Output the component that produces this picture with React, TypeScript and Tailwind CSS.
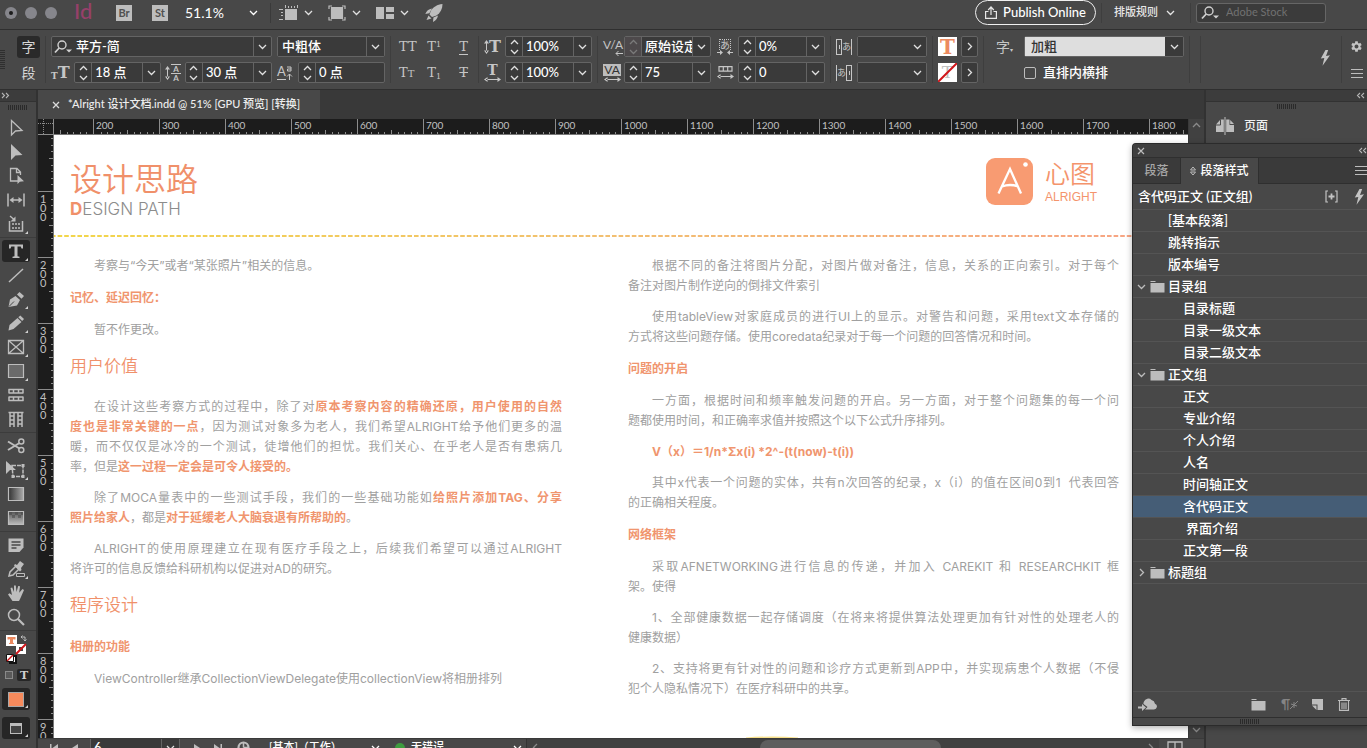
import React from "react";
import { MdSettings } from "react-icons/md";

type Kids = { children?: React.ReactNode };

/* ---------- small shared drawings ---------- */

function Chevron({ dir = "down", className = "" }: { dir?: "down" | "up" | "left" | "right"; className?: string }) {
  const d = {
    down: "M1 3 L4.500 6.500 L8 3",
    up: "M1 6 L4.500 2.500 L8 6",
    left: "M6 1 L2.500 4.500 L6 8",
    right: "M3 1 L6.500 4.500 L3 8",
  }[dir];
  return (
    <svg width="9" height="9" viewBox="0 0 9 9" fill="none" stroke="currentColor" strokeWidth="1.3" className={"shrink-0 " + className}>
      <path d={d} />
    </svg>
  );
}

function DoubleChevron({ dir }: { dir: "left" | "right" }) {
  return (
    <svg width="9" height="7" viewBox="0 0 9 7" fill="none" stroke="#b5b5b5" strokeWidth="1.1">
      <path d={dir === "right" ? "M1 1 L3.500 3.500 L1 6 M5 1 L7.500 3.500 L5 6" : "M4 1 L1.500 3.500 L4 6 M8 1 L5.500 3.500 L8 6"} />
    </svg>
  );
}

function Grip() {
  return (
    <svg width="20" height="5" viewBox="0 0 20 5" stroke="#2a2a2a" strokeWidth="1">
      <path d="M.5 0v5M2.500 0v5M4.500 0v5M6.500 0v5M8.500 0v5M10.500 0v5M12.500 0v5M14.500 0v5M16.500 0v5M18.500 0v5" />
    </svg>
  );
}

function Sep({ className = "" }: { className?: string }) {
  return <div className={"mx-[5px] w-px shrink-0 bg-[#3e3e3e] " + className} />;
}

function SearchGlyph() {
  return (
    <svg width="19" height="14" viewBox="0 0 19 14" className="shrink-0" fill="none" stroke="#d0d0d0" strokeWidth="1.400">
      <circle cx="8" cy="5" r="4" />
      <path d="M5.200 8 L1 12.500" strokeWidth="1.800" />
      <path d="M12 9.500h6l-3 3z" fill="#d0d0d0" stroke="none" />
    </svg>
  );
}

function Folder() {
  return (
    <svg width="15" height="12" viewBox="0 0 15 12" fill="#bdbdbd" className="shrink-0">
      <path d="M.5 0h5v1h-5zM.5 2H14.500V11.500H.5z" />
    </svg>
  );
}

function Bolt() {
  return (
    <svg width="11" height="16" viewBox="0 0 11 16" fill="#c4c4c4" className="shrink-0">
      <path d="M5.500 0 L.8 8.500 L4.300 8 L2.500 15.800 L10 5.300 L6 6 L8.200 0z" />
    </svg>
  );
}

function MenuLines() {
  return (
    <svg width="12" height="9" viewBox="0 0 12 9" stroke="#bdbdbd" className="shrink-0">
      <path d="M0 .5h12M0 4.500h12M0 8.500h12" />
    </svg>
  );
}

/* ---------- application bar ---------- */

function BarMenu({ label, children }: Kids & { label: string }) {
  return (
    <button aria-label={label} className="flex items-center gap-1.5 text-[#e0e0e0]">
      {children}
      <Chevron />
    </button>
  );
}

function AppBar() {
  return (
    <header className="flex h-[30px] shrink-0 items-start border-b border-[#2f2f2f] bg-[#484848]">
      <div className="flex h-[25px] items-center">
        <div className="ml-[5px] flex gap-2">
          <span className="grid size-3 place-items-center rounded-full bg-[#86868c]">
            <span className="size-1 rounded-full bg-[#1c1c1c]" />
          </span>
          <span className="size-3 rounded-full bg-[#86868c]" />
          <span className="size-3 rounded-full bg-[#86868c]" />
        </div>
        <span className="ml-[17px] w-6 pb-1 text-[22px] leading-5 font-medium text-[#96406a]">Id</span>
        <a href="#bridge" className="ml-[18px] grid size-4 place-items-center bg-[#bdbdbd] text-[11px] font-bold text-[#505050]">Br</a>
        <a href="#stock" className="ml-5 grid size-4 place-items-center bg-[#bdbdbd] text-[11px] font-bold text-[#505050]">St</a>
        <button className="ml-[17px] flex w-[73px] items-center justify-between text-[14px] text-white">
          51.1%
          <Chevron />
        </button>
        <div className="ml-3 h-5 w-px bg-[#3a3a3a]" />
        <div className="ml-2 flex gap-[15px]">
          <BarMenu label="视图选项">
            <svg width="19" height="17" viewBox="0 0 19 17" fill="#bdbdbd">
              <path d="M6 5h12v11H6z" />
              <path d="M6 1h1v3H6zM9 2h1v2H9zM12 2h1v2h-1zM15 2h1v2h-1zM18 1h1v3h-1zM0 5h4v1H0zM2 8h2v1H2zM2 11h2v1H2zM0 15h4v1H0z" />
            </svg>
          </BarMenu>
          <BarMenu label="屏幕模式">
            <svg width="18" height="16" viewBox="0 0 18 16" fill="none" stroke="#bdbdbd" strokeWidth="1.200">
              <path d="M3.500 2.500h11v11h-11z" fill="#bdbdbd" />
              <path d="M1 4V1h3M14 1h3v3M17 12v3h-3M4 15H1v-3" />
            </svg>
          </BarMenu>
          <BarMenu label="排列文档">
            <svg width="18" height="12" viewBox="0 0 18 12" fill="#bdbdbd">
              <path d="M0 0h8v12H0zM10 0h8v5h-8zM10 7h8v5h-8z" />
            </svg>
          </BarMenu>
        </div>
        <button aria-label="GPU 性能" className="ml-4">
          <svg width="18" height="18" viewBox="0 0 18 18" fill="#bdbdbd">
            <path d="M17.500 0C12 .5 8.500 3 6 6.500L4.500 10.500 7 13l4.500-1.500C15.500 8.500 17.500 5 17.500 0z" />
            <path d="M7 4.500C3.500 5 1.500 7 .3 10l4-.8zM13 11.500c-.5 3-2 5-5 6.500l.4-4.500zM3.500 11.500L1.500 16l5-1.500z" />
          </svg>
        </button>
      </div>

      <div className="ml-auto flex h-[25px] items-center">
        <button className="flex h-[25px] items-center gap-1.5 rounded-full border border-[#f0f0f0] px-[9px] text-[13px] font-medium text-white">
          <svg width="12" height="13" viewBox="0 0 12 13" fill="none" stroke="#e6e6e6" strokeWidth="1.200">
            <path d="M3.500 5.500H.6v6.800h10.800V5.500H8.500" />
            <path d="M6 9V1.500M3.200 4L6 1l2.800 3" />
          </svg>
          Publish Online
        </button>
        <Sep className="h-5" />
        <button className="ml-[7px] flex items-center gap-2 text-[11px] font-medium text-[#e6e6e6]">
          排版规则
          <Chevron />
        </button>
        <div className="ml-[15px] h-5 w-px bg-[#3e3e3e]" />
        <label className="mr-[41px] ml-[5px] flex h-5 w-[130px] items-center gap-1.5 rounded-[3px] border border-[#666] bg-[#3b3b3b] px-1">
          <SearchGlyph />
          <input aria-label="搜索 Adobe Stock" placeholder="Adobe Stock" className="w-full min-w-0 bg-transparent text-[11px] outline-none placeholder:text-[#717171]" />
        </label>
      </div>
    </header>
  );
}

/* ---------- control bar ---------- */

function Field({ label, value, className, spin = false, spinOff = false, drop = true, lead }: {
  label: string; value: string; className: string; spin?: boolean; spinOff?: boolean; drop?: boolean; lead?: React.ReactNode;
}) {
  return (
    <div className={"flex h-[21px] shrink-0 overflow-hidden rounded-[2px] border border-[#646464] bg-[#3a3a3a] text-[#e0e0e0] " + className}>
      {spin && (
        <button
          aria-label={label + " 微调"}
          disabled={spinOff}
          className={"flex w-[17px] shrink-0 flex-col items-center justify-center border-r border-[#646464] " + (spinOff ? "bg-[#4d494b] text-[#7a7a7a]" : "")}
        >
          <Chevron dir="up" />
          <Chevron />
        </button>
      )}
      {lead}
      <input aria-label={label} defaultValue={value} className="w-full min-w-0 flex-1 bg-transparent pl-[3px] text-[13px] font-medium text-white outline-none" />
      {drop && (
        <button aria-label={label + " 菜单"} className="grid w-[18px] shrink-0 place-items-center border-l border-[#646464]">
          <Chevron />
        </button>
      )}
    </div>
  );
}

function Pick({ label, value, className, box = "bg-[#3a3a3a] text-white", arrow = "" }: {
  label: string; value: string; className: string; box?: string; arrow?: string;
}) {
  return (
    <div className={"relative flex h-[21px] shrink-0 rounded-[2px] border border-[#646464] " + className}>
      <select aria-label={label} className={"w-full appearance-none pl-1 text-[13px] font-medium outline-none " + box}>
        <option>{value}</option>
      </select>
      <span className={"pointer-events-none absolute inset-y-0 right-0 grid w-[18px] place-items-center text-[#e0e0e0] " + arrow}>
        <Chevron />
      </span>
    </div>
  );
}

function Stack({ children, className = "" }: Kids & { className?: string }) {
  return <div className={"flex shrink-0 flex-col gap-[5px] " + className}>{children}</div>;
}

function Row({ children, className = "" }: Kids & { className?: string }) {
  return <div className={"flex h-[21px] items-center " + className}>{children}</div>;
}

const serif = "[font-family:'DejaVu_Serif',serif] leading-none text-[#c6c6c6] ";

function Arrows({ vertical = false }: { vertical?: boolean }) {
  return vertical ? (
    <svg width="5" height="14" viewBox="0 0 5 14" fill="#c6c6c6" className="shrink-0">
      <path d="M2 2h1v10H2zM0 3.500L2.500 0 5 3.500zM0 10.500L2.500 14 5 10.500z" />
    </svg>
  ) : (
    <svg width="17" height="5" viewBox="0 0 17 5" fill="#c6c6c6" className="shrink-0">
      <path d="M2 2h13v1H2zM3.500 0L0 2.500 3.500 5zM13.500 0L17 2.500 13.500 5z" />
    </svg>
  );
}

function KanaSpace({ after }: { after?: boolean }) {
  const mark = (
    <span className="grid h-4 w-[6px] place-items-center border border-[#c6c6c6]">
      <span className="h-1 w-px bg-[#c6c6c6]" />
    </span>
  );
  return (
    <span className="flex w-[17px] items-center text-[9px] leading-none text-[#c6c6c6]">
      {after ? <span className="h-4 w-px bg-[#c6c6c6]" /> : mark}
      あ
      {after ? mark : <span className="h-4 w-px bg-[#c6c6c6]" />}
    </span>
  );
}

function ControlBar() {
  return (
    <section aria-label="控制" className="flex h-[60px] shrink-0 items-start overflow-hidden border-b border-[#2f2f2f] bg-[#484848] pt-1.5">
      <div className="mt-3.5 h-5 w-[5px] shrink-0 bg-[repeating-linear-gradient(#2f2f2f_0_1px,#484848_1px_2px)]" />
      <div className="ml-3 flex w-[23px] shrink-0 flex-col items-center gap-1 text-[14px] text-[#d6d6d6]">
        <button className="grid h-[22px] w-full place-items-center rounded-[3px] bg-[#2a2a2a] leading-none">字</button>
        <button className="grid h-[22px] w-full place-items-center leading-none">段</button>
      </div>
      <Sep className="h-[47px]" />
      <Stack className="w-[221px]">
        <Field label="字体" value="苹方-简" className="w-full" lead={<span className="flex items-center pl-0.5"><SearchGlyph /></span>} />
        <Row className="justify-between">
          <span className={serif + "flex w-[19px] items-end font-bold"}>
            <span className="text-[9px] leading-none">T</span>
            <span className="text-[16px] leading-none">T</span>
          </span>
          <Field label="字号" value="18 点" className="w-[87px]" spin />
          <span className="flex items-center gap-px">
            <Arrows vertical />
            <span className="flex flex-col items-center text-[8px] leading-2 font-bold text-[#c6c6c6]">
              <span className="border-t border-[#c6c6c6] px-0.5">A</span>
              <span className="border-t border-[#c6c6c6] px-0.5">A</span>
            </span>
          </span>
          <Field label="行距" value="30 点" className="w-[87px]" spin />
        </Row>
      </Stack>
      <Stack className="ml-[5px] w-[108px]">
        <Pick label="字体样式" value="中粗体" className="w-full" arrow="border-l border-[#646464]" />
        <Row className="justify-between">
          <span className="flex text-[#c6c6c6]">
            <span className="border-b border-[#c6c6c6] text-[13px] leading-[13px]">A</span>
            <svg width="7" height="15" viewBox="0 0 7 15" fill="none" stroke="#c6c6c6">
              <path d="M1 2h4v4H1.500V4H5M3.500 15V9M1 11.500L3.500 9 6 11.500" />
            </svg>
          </span>
          <Field label="基线偏移" value="0 点" className="w-[87px]" spin drop={false} />
        </Row>
      </Stack>
      <Sep className="h-[47px]" />
      <div className="ml-[3px] grid w-[73px] shrink-0 grid-cols-3 gap-y-[5px]">
        <button aria-label="全部大写字母" className={serif + "h-[21px] text-left text-[13px]"}>TT</button>
        <button aria-label="上标" className={serif + "h-[21px] pl-1 text-left text-[13px]"}>T<sup className="text-[8px]">1</sup></button>
        <button aria-label="下划线" className={serif + "h-[21px] pr-1 text-right text-[13px]"}><span className="border-b border-[#c6c6c6]">T</span></button>
        <button aria-label="小型大写字母" className={serif + "h-[21px] text-left text-[13px]"}>T<span className="text-[10px]">T</span></button>
        <button aria-label="下标" className={serif + "h-[21px] pl-1 text-left text-[13px]"}>T<sub className="text-[8px]">1</sub></button>
        <button aria-label="删除线" className={serif + "h-[21px] pr-1 text-right text-[13px] line-through"}>T</button>
      </div>
      <Sep className="ml-1.5 h-[47px]" />
      <Stack className="w-[108px]">
        <Row className="justify-between">
          <span className={serif + "flex items-center text-[16px] font-bold"}><Arrows vertical />T</span>
          <Field label="垂直缩放" value="100%" className="w-[87px]" spin />
        </Row>
        <Row className="justify-between">
          <span className={serif + "flex flex-col items-center text-[14px] font-bold"}>
            <span className="h-[14px] leading-[14px]">T</span>
            <Arrows />
          </span>
          <Field label="水平缩放" value="100%" className="w-[87px]" spin />
        </Row>
      </Stack>
      <Sep className="h-[47px]" />
      <Stack className="w-[108px]">
        <Row className="justify-between">
          <span className="flex flex-col items-end text-[12px] text-[#c6c6c6]">
            <span className="h-[13px] leading-[13px]">V/A</span>
            <svg width="8" height="5" viewBox="0 0 8 5" stroke="#c6c6c6" fill="none"><path d="M8 2.500H1M3.500 0L1 2.500 3.500 5" /></svg>
          </span>
          <Field label="字偶间距" value="原始设定" className="w-[87px]" spin spinOff />
        </Row>
        <Row className="justify-between">
          <span className="flex flex-col items-center gap-px">
            <span className="w-[18px] bg-[#bdbdbd] text-center text-[12px] leading-[12px] text-[#333]">VA</span>
            <Arrows />
          </span>
          <Field label="字符间距" value="75" className="w-[87px]" spin />
        </Row>
      </Stack>
      <Stack className="ml-1.5 w-[108px]">
        <Row className="justify-between">
          <span className="flex flex-col items-center text-[10px] text-[#c6c6c6]">
            <span className="border-x border-t border-dotted border-[#c6c6c6] leading-[10px]">あ</span>
            <svg width="16" height="5" viewBox="0 0 16 5" fill="#c6c6c6"><path d="M0 2h3v1H0zM3 0l3 2.500L3 5zM13 2h3v1h-3zM13 0l-3 2.500L13 5z" /></svg>
          </span>
          <Field label="比例间距" value="0%" className="w-[87px]" spin />
        </Row>
        <Row className="justify-between">
          <span className="flex flex-col items-center gap-0.5">
            <svg width="15" height="6" viewBox="0 0 15 6" fill="none" stroke="#c6c6c6" strokeWidth="1.200"><path d="M1 .6h13v4.500H1zM5.300 1v4M9.700 1v4" /></svg>
            <Arrows />
          </span>
          <Field label="网格指定格数" value="0" className="w-[87px]" spin />
        </Row>
      </Stack>
      <Sep className="h-[47px]" />
      <Stack>
        <Row className="gap-1"><KanaSpace /><Pick label="字符前挤压间距" value="" className="w-[70px]" /></Row>
        <Row className="gap-1"><KanaSpace after /><Pick label="字符后挤压间距" value="" className="w-[70px]" /></Row>
      </Stack>
      <Sep className="h-[47px]" />
      <Stack>
        <Row className="gap-1">
          <button aria-label="填色" className="grid size-[19px] place-items-center bg-white text-[20px] leading-none font-bold text-[#ec8a60] [font-family:'DejaVu_Serif',serif]">T</button>
          <button aria-label="填色选项" className="grid h-[21px] w-[17px] place-items-center rounded-[2px] border border-[#646464] bg-[#3a3a3a] text-[#e0e0e0]"><Chevron dir="right" /></button>
        </Row>
        <Row className="gap-1">
          <button aria-label="描边" className="relative grid size-[19px] place-items-center bg-white text-[17px] leading-none text-[#c0c0c0] [font-family:'DejaVu_Serif',serif]">
            T
            <svg viewBox="0 0 19 19" className="absolute inset-0" stroke="#d0161b" strokeWidth="2"><path d="M0 19L19 0" /></svg>
          </button>
          <button aria-label="描边选项" className="grid h-[21px] w-[17px] place-items-center rounded-[2px] border border-[#646464] bg-[#3a3a3a] text-[#e0e0e0]"><Chevron dir="right" /></button>
        </Row>
      </Stack>
      <Sep className="h-[47px]" />
      <span className="mt-1 ml-[7px] w-[28px] shrink-0 text-[14px] leading-none text-[#c6c6c6]">字<span className="text-[6px]">▾</span></span>
      <Stack>
        <Pick label="字符样式" value="加粗" className="w-[160px]" box="bg-[#dedede] pl-1.5 text-[#333]" arrow="bg-[#3a3a3a]" />
        <Row>
          <label className="flex items-center gap-[7px] text-[13px] font-medium text-white">
            <input type="checkbox" className="size-3 appearance-none rounded-[2px] border border-[#bdbdbd]" />
            直排内横排
          </label>
        </Row>
      </Stack>
      <Sep className="h-[47px]" />
      <Sep className="h-[47px]" />
      <div className="ml-auto flex items-start">
        <button aria-label="快速应用" className="mt-3.5 mr-[5px]"><Bolt /></button>
        <Sep className="h-[47px]" />
        <div className="mr-1 ml-[3px] flex flex-col items-center gap-4 pt-1">
          <button aria-label="设置"><MdSettings size={13} color="#c4c4c4" /></button>
          <button aria-label="菜单"><MenuLines /></button>
        </div>
      </div>
    </section>
  );
}

/* ---------- tools ---------- */

const G = "#bdbdbd";
type ToolDef = { name: string; art: React.ReactNode; more?: boolean; on?: boolean };

const toolGroups: ToolDef[][] = [
  [
    { name: "选择", art: <path d="M5.500 2.500V17L9.500 13l6.500-.5z" fill="none" stroke={G} strokeWidth="1.300" /> },
    { name: "直接选择", art: <path d="M5 2V18L9.500 13.500l7-.5z" fill={G} /> },
    { name: "页面", art: <><path d="M12 15H4.500V2.500H11l3.500 3.500v3M10.500 3v3.500H14" fill="none" stroke={G} strokeWidth="1.300" /><path d="M11.500 9v9l2.300-2.300 4.200-.4z" fill={G} /></> },
    { name: "间隙", art: <><path d="M2 3.500v13M18 3.500v13M5 10h10" stroke={G} strokeWidth="1.500" /><path d="M7.500 7L3.500 10l4 3zM12.500 7l4 3-4 3z" fill={G} /></> },
    { name: "内容收集器", more: true, art: <><path d="M3.500 7v10h13V7" fill="none" stroke={G} strokeWidth="1.500" /><path d="M6 10h9M6 14h9" stroke={G} strokeDasharray="2 1" strokeWidth="1.500" /><path d="M4 2l4 3.500" stroke={G} strokeWidth="1.300" /><path d="M9.500 2.500v5h-5z" fill={G} /></> },
  ],
  [
    { name: "文字", more: true, on: true, art: <path d="M3 3.500h14v4h-1.500l-.8-2H11.500v9.700l2 .5v1.300h-7v-1.300l2-.5V5.500H5.300l-.8 2H3z" fill={G} /> },
    { name: "直线", art: <path d="M3 17L17 4" stroke={G} strokeWidth="1.500" /> },
    { name: "钢笔", more: true, art: <><path d="M2.500 18l1.500-7.500 5.500-3.500 4.500 4-3 5.500z" fill={G} /><path d="M11 5.500l2.500-2.500 4.500 4-2.500 2.800z" fill={G} /><path d="M3 17.500l5-5" stroke="#484848" /></> },
    { name: "铅笔", more: true, art: <><path d="M2.500 17.500l1-5.500 8-7 4 4-8 7z" fill={G} /><path d="M12.300 4.200l2-1.700 3.700 3.500-1.800 2z" fill={G} /></> },
    { name: "矩形框架", more: true, art: <path d="M2.500 3.500h15v13h-15zM2.500 3.500l15 13M17.500 3.500l-15 13" fill="none" stroke={G} strokeWidth="1.300" /> },
    { name: "矩形", more: true, art: <path d="M2.500 3.500h15v13h-15z" fill="#6a6a6a" stroke={G} strokeWidth="1.200" /> },
    { name: "水平网格", art: <path d="M2.500 4.500h15M2.500 8h15M2.500 12h15M2.500 15.500h15M3 4v4M7.500 4v4M12.500 4v4M17 4v4M3 12v4M7.500 12v4M12.500 12v4M17 12v4" stroke={G} strokeWidth="1.500" /> },
    { name: "垂直网格", art: <path d="M2.500 3.500h15M4 3v15M8 3v15M12 3v15M16 3v15M4 7h4M4 11h4M4 15h4M12 7h4M12 11h4M12 15h4" stroke={G} strokeWidth="1.500" /> },
  ],
  [
    { name: "剪刀", art: <><path d="M2 5.500l11.500 7M2 14l11.500-7" stroke={G} strokeWidth="2" /><circle cx="15.300" cy="5.500" r="2.500" fill="none" stroke={G} strokeWidth="1.500" /><circle cx="15.300" cy="14" r="2.500" fill="none" stroke={G} strokeWidth="1.500" /></> },
    { name: "自由变换", more: true, art: <><path d="M6 5.500h11v11H7z" fill="none" stroke={G} strokeDasharray="4 1" strokeWidth="1.500" /><path d="M0 1v13l4-4h6z" fill={G} /><path d="M5.500 15h3v3h-3zM15.500 15h3v3h-3zM15.500 4h3v3h-3z" fill={G} /></> },
    { name: "渐变色板", art: <><defs><linearGradient id="g1"><stop offset="0" stopColor="#333" /><stop offset="1" stopColor="#aaa" /></linearGradient></defs><path d="M2.500 3.500h15v13h-15z" fill="url(#g1)" stroke={G} strokeWidth="1.200" /></> },
    { name: "渐变羽化", art: <><defs><linearGradient id="g2" x2="0" y2="1"><stop offset="0" stopColor="#555" /><stop offset="1" stopColor="#bbb" /></linearGradient></defs><path d="M2.500 3.500h15v13h-15z" fill="url(#g2)" stroke={G} strokeWidth="1.200" /><path d="M3 4h3v3H3zM9 4h3v3H9zM6 7h3v3H6zM12 7h3v3h-3zM15 4h2v3h-2z" fill="#444" opacity=".5" /></> },
  ],
  [
    { name: "附注", art: <><path d="M2.500 3.500h15v9l-4 4.500h-11z" fill={G} /><path d="M5.500 7h9M5.500 10h9M5.500 13h5" stroke="#484848" strokeWidth="1.300" /></> },
    { name: "吸管", more: true, art: <><path d="M3 17l1-4 6-6 3 3-6 6z" fill="none" stroke={G} strokeWidth="1.500" /><path d="M9 5l2 1 3-4 4 3-3 4 .5 2-1.500 1.500L8 6.500z" fill={G} /><path d="M10.500 14.500h8v3h-8z" fill="none" stroke={G} /></> },
    { name: "抓手", art: <path d="M6.500 18L2 11.500l1.500-1.200L6 12 4.500 5l1.700-.5L8 9V2.500h1.800L10.500 9l1.700-6 1.800.3-.8 6.500L16.500 6l1.500 1-3.500 8-1.500 3z" fill={G} /> },
    { name: "缩放显示", art: <><circle cx="8" cy="8" r="5.500" fill="none" stroke={G} strokeWidth="1.500" /><path d="M12 12l6 6" stroke={G} strokeWidth="2.200" /></> },
  ],
];

function MoreMark() {
  return (
    <svg width="3" height="3" viewBox="0 0 4 4" className="absolute right-0.5 bottom-0.5" fill="#d0d0d0"><path d="M4 0v4H0z" /></svg>
  );
}

function Toolbar() {
  return (
    <nav aria-label="工具" className="flex w-[38px] shrink-0 flex-col overflow-hidden border-r-2 border-[#323232] bg-[#484848]">
      <div className="flex h-3 shrink-0 items-center border-b border-[#323232] bg-[#3c3c3c] pl-px"><DoubleChevron dir="right" /></div>
      <div className="flex h-3.5 shrink-0 justify-center pt-[3px]"><Grip /></div>
      {toolGroups.map((group, i) => (
        <div key={i} className={"mb-px shrink-0 " + (i ? "border-t border-[#3c3c3c] pt-px" : "")}>
          {group.map((t) => (
            <button key={t.name} aria-label={t.name} className="relative ml-0.5 flex h-6 w-7 items-center justify-center">
              <span className={"flex h-[22px] w-7 items-center justify-center rounded-[3px] " + (t.on ? "bg-[#262626]" : "")}>
                <svg width="20" height="20" viewBox="0 0 20 20">{t.art}</svg>
              </span>
              {t.more && <MoreMark />}
            </button>
          ))}
        </div>
      ))}
      <div className="flex shrink-0 flex-col items-start border-t border-[#3c3c3c] pt-1 pl-0.5">
        <button aria-label="填色与描边" className="ml-1">
          <svg width="22" height="30" viewBox="0 0 22 30">
            <path d="M10 9h10v10H10z" fill="#fff" />
            <path d="M13 12h4v4h-4z" fill="#484848" />
            <path d="M10 19L20 9" stroke="#d0161b" strokeWidth="2" />
            <path d="M0 0h11v11H0z" fill="#fff" />
            <path d="M1.500 2h8v2.500h-2l-.5-.8v4l1 .6v.7H3v-.7l1-.6v-4l-.5.8h-2z" fill="#ec8a60" />
            <path d="M15 2h4v4M15 2l1.500-1.500M15 2l1.500 1.500M19 6l-1.500-1.500M19 6l1.500-1.500" fill="none" stroke={G} />
            <path d="M4 21h6v7H4z" fill="#fff" stroke="#111" strokeWidth="2" />
            <path d="M.5 19.500h7v7h-7z" fill="#fff" stroke="#111" />
            <path d="M1 26l6-6" stroke="#d0161b" strokeWidth="1.500" />
          </svg>
        </button>
        <div className="mt-1 flex items-center gap-1 pl-[3px]">
          <button aria-label="格式针对容器" className="size-2 border border-[#8a8a8a] bg-[#5a5a5a]" />
          <button aria-label="格式针对文本" className="grid h-3 w-3.5 place-items-center rounded-[2px] bg-[#262626] text-[11px] leading-none font-bold text-[#d0d0d0] [font-family:'DejaVu_Serif',serif]">T</button>
        </div>
        <button aria-label="应用颜色" className="relative mt-[7px] grid h-[22px] w-7 place-items-center rounded-[3px] bg-[#262626]">
          <span className="h-[15px] w-4 border border-[#a8a8a8] bg-[#f68a5c]" />
          <MoreMark />
        </button>
        <button aria-label="屏幕模式" className="relative mt-[7px] grid h-[22px] w-7 place-items-center rounded-[3px] bg-[#262626]">
          <span className="h-[11px] w-3 border-x border-t-[3px] border-b border-[#bdbdbd] bg-[#444]" />
          <MoreMark />
        </button>
      </div>
    </nav>
  );
}

/* ---------- rulers ---------- */

const minor = [1, 2, 3, 4, 5, 6, 7, 8, 9];

function HTicks() {
  return (
    <svg width="66" height="4" viewBox="0 0 66 4" className="mt-auto shrink-0" fill="#8c8c8c">
      {minor.map((n) => <rect key={n} x={Math.round(n * 6.6)} y={n === 5 ? 0 : 2} width="1" height="4" />)}
    </svg>
  );
}

function VTicks() {
  return (
    <svg width="4" height="66" viewBox="0 0 4 66" className="ml-auto shrink-0" fill="#8c8c8c">
      {minor.map((n) => <rect key={n} y={Math.round(n * 6.6)} x={n === 5 ? 0 : 2} height="1" width="4" />)}
    </svg>
  );
}

function HRuler() {
  const marks = Array.from({ length: 17 }, (_, i) => 200 + i * 100);
  return (
    <div className="flex h-4 min-w-0 flex-1 overflow-hidden border-b border-[#777] bg-[#1c1c1c] text-[10px] leading-[12px] text-[#c0c0c0]">
      <div className="flex w-[39px] shrink-0 justify-end overflow-hidden"><HTicks /></div>
      {marks.map((m) => (
        <div key={m} className="flex w-[66px] shrink-0 flex-col border-l border-[#8c8c8c]">
          <span className="h-[11px] pl-0.5">{m}</span>
          <HTicks />
        </div>
      ))}
    </div>
  );
}

function VRuler() {
  const marks = Array.from({ length: 9 }, (_, i) => 100 + i * 100);
  return (
    <div className="flex w-4 shrink-0 flex-col overflow-hidden border-r border-[#777] bg-[#1c1c1c] text-[11px] leading-[9px] text-[#c0c0c0]">
      <div className="flex h-14 shrink-0 flex-col justify-end overflow-hidden"><VTicks /></div>
      {marks.map((m) => (
        <div key={m} className="flex h-[66px] shrink-0 overflow-hidden border-t border-[#8c8c8c]">
          <span className="ml-[2px] w-[8px] pt-0.5 break-all">{m}</span>
          <VTicks />
        </div>
      ))}
    </div>
  );
}

/* ---------- document ---------- */

function Full({ children, first = false }: Kids & { first?: boolean }) {
  return <span className={"block whitespace-nowrap [text-align-last:justify] " + (first ? "pl-6" : "")}>{children}</span>;
}
function Tail({ children, first = false }: Kids & { first?: boolean }) {
  return <span className={"block whitespace-nowrap " + (first ? "pl-6" : "")}>{children}</span>;
}
function B({ children }: Kids) {
  return <b className="font-bold text-[#f0956e]">{children}</b>;
}
function H2({ children }: Kids) {
  return <h2 className="mt-[5px] mb-2.5 text-[17px] font-[350] text-[#f0906a]">{children}</h2>;
}
function H3({ children }: Kids) {
  return <h3 className="my-px font-bold text-[#f0956e]">{children}</h3>;
}

function Page() {
  return (
    <main className="flex min-w-0 flex-1 flex-col overflow-hidden bg-white [font-family:Inter,'Noto_Sans_CJK_SC',sans-serif]">
      <div className="flex h-[100px] w-[1043px] shrink-0 items-start justify-between pt-[23px] pl-4">
        <div>
          <h1 className="text-[32px] leading-[44px] font-[350] text-[#f0906a]">设计思路</h1>
          <p className="text-[17px] leading-[14px] font-light text-[#8c8c8c]"><b className="font-bold text-[#f0906a]">D</b>ESIGN PATH</p>
        </div>
        <div className="flex items-center gap-3">
          <svg width="47" height="47" viewBox="0 0 47 47">
            <rect width="47" height="47" rx="9" fill="#f89b72" />
            <path d="M12.500 35.500L24 11l11 24.500M16 28.500q8-3 16 0" fill="none" stroke="#fff" strokeWidth="2.300" />
            <circle cx="39.500" cy="6.500" r="2.300" fill="#fff" />
          </svg>
          <div className="text-[#f4946c]">
            <div className="text-[25px] leading-[30px] font-[350]">心图</div>
            <div className="text-[12px] leading-4 [font-family:'Liberation_Sans',sans-serif]">ALRIGHT</div>
          </div>
        </div>
      </div>
      <svg width="100%" height="2" className="block shrink-0">
        <defs>
          <linearGradient id="rule" gradientUnits="userSpaceOnUse" x1="0" x2="1075" y1="0" y2="0">
            <stop offset="0" stopColor="#f2d64a" />
            <stop offset=".5" stopColor="#f2c070" />
            <stop offset="1" stopColor="#f7a583" />
          </linearGradient>
        </defs>
        <path d="M0 1H2000" stroke="url(#rule)" strokeWidth="2" strokeDasharray="4.600 2" strokeDashoffset="3" />
      </svg>
      <div className="flex gap-[66px] pt-[19px] pl-4 text-[12px] leading-5 text-[#a0a0a0]">
        <article className="flex w-[492px] shrink-0 flex-col gap-[11px]">
          <p><Tail first>考察与“今天”或者“某张照片”相关的信息。</Tail></p>
          <H3>记忆、延迟回忆：</H3>
          <p><Tail first>暂不作更改。</Tail></p>
          <H2>用户价值</H2>
          <p>
            <Full first>在设计这些考察方式的过程中，除了对<B>原本考察内容的精确还原，用户使用的自然</B></Full>
            <Full><B>度也是非常关键的一点</B>，因为测试对象多为老人，我们希望ALRIGHT给予他们更多的温</Full>
            <Full>暖，而不仅仅是冰冷的一个测试，徒增他们的担忧。我们关心、在乎老人是否有患病几</Full>
            <Tail>率，但是<B>这一过程一定会是可令人接受的。</B></Tail>
          </p>
          <p>
            <Full first>除了MOCA量表中的一些测试手段，我们的一些基础功能如<B>给照片添加TAG、分享</B></Full>
            <Tail><B>照片给家人</B>，都是<B>对于延缓老人大脑衰退有所帮助的</B>。</Tail>
          </p>
          <p>
            <Full first>ALRIGHT的使用原理建立在现有医疗手段之上，后续我们希望可以通过ALRIGHT</Full>
            <Tail>将许可的信息反馈给科研机构以促进对AD的研究。</Tail>
          </p>
          <H2>程序设计</H2>
          <H3>相册的功能</H3>
          <p><Tail first>ViewController继承CollectionViewDelegate使用collectionView将相册排列</Tail></p>
        </article>
        <article className="flex w-[491px] shrink-0 flex-col gap-[11px]">
          <p>
            <Full first>根据不同的备注将图片分配，对图片做对备注，信息，关系的正向索引。对于每个</Full>
            <Tail>备注对图片制作逆向的倒排文件索引</Tail>
          </p>
          <p>
            <Full first>使用tableView对家庭成员的进行UI上的显示。对警告和问题，采用text文本存储的</Full>
            <Tail>方式将这些问题存储。使用coredata纪录对于每一个问题的回答情况和时间。</Tail>
          </p>
          <H3>问题的开启</H3>
          <p>
            <Full first>一方面，根据时间和频率触发问题的开启。另一方面，对于整个问题集的每一个问</Full>
            <Tail>题都使用时间，和正确率求值并按照这个以下公式升序排列。</Tail>
          </p>
          <p><Tail first><B>V（x）＝1/n*Σx(i) *2^-(t(now)-t(i))</B></Tail></p>
          <p>
            <Full first>其中x代表一个问题的实体，共有n次回答的纪录，x（i）的值在区间0到1&nbsp; 代表回答</Full>
            <Tail>的正确相关程度。</Tail>
          </p>
          <H3>网络框架</H3>
          <p>
            <Full first>采取AFNETWORKING进行信息的传递，并加入 CAREKIT 和 RESEARCHKIT 框</Full>
            <Tail>架。使得</Tail>
          </p>
          <p>
            <Full first>1、全部健康数据一起存储调度（在将来将提供算法处理更加有针对性的处理老人的</Full>
            <Tail>健康数据）</Tail>
          </p>
          <p>
            <Full first>2、支持将更有针对性的问题和诊疗方式更新到APP中，并实现病患个人数据（不侵</Full>
            <Tail>犯个人隐私情况下）在医疗科研中的共享。</Tail>
          </p>
        </article>
      </div>
      <svg width="52" height="2" viewBox="0 0 52 2" className="mt-auto ml-[692px] shrink-0">
        <ellipse cx="26" cy="20" rx="80" ry="19.500" fill="#f7e08a" />
      </svg>
    </main>
  );
}

function StatusBar() {
  return (
    <footer className="flex h-2.5 shrink-0 items-start overflow-hidden border-t border-[#3a3a3a] bg-[#484848] text-[12px] font-medium text-white">
      <div className="flex h-[17px] w-[488px] shrink-0 items-center text-[#bdbdbd]">
        <button aria-label="首页" className="ml-3"><svg width="8" height="8" viewBox="0 0 8 8" fill="#bdbdbd"><path d="M0 0h1.500v8H0zM8 0v8L2.500 4z" /></svg></button>
        <button aria-label="上一页" className="ml-3.5"><svg width="6" height="8" viewBox="0 0 6 8" fill="#bdbdbd"><path d="M6 0v8L0 4z" /></svg></button>
        <Field label="页码" value="6" className="ml-3 w-[90px]" />
        <button aria-label="下一页" className="ml-3.5"><svg width="6" height="8" viewBox="0 0 6 8" fill="#bdbdbd"><path d="M0 0v8l6-4z" /></svg></button>
        <button aria-label="末页" className="ml-3.5"><svg width="8" height="8" viewBox="0 0 8 8" fill="#bdbdbd"><path d="M6.500 0H8v8H6.500zM0 0v8l5.500-4z" /></svg></button>
        <button aria-label="打开" className="ml-[15px]"><svg width="13" height="13" viewBox="0 0 13 13" fill="none" stroke="#bdbdbd" strokeWidth="2.200"><circle cx="6.500" cy="6.500" r="5" /><path d="M6.500 6.500V1M6.500 6.500H12" strokeWidth="1.500" /></svg></button>
        <button className="ml-[19px] flex w-[111px] items-center justify-between text-[11px] text-white">[基本]（工作）<Chevron /></button>
        <button className="ml-[15px] flex w-[127px] items-center text-[11px] text-white">
          <span className="mr-1.5 size-2.5 rounded-full bg-[#3f9c3f]" />无错误<Chevron className="ml-auto" />
        </button>
      </div>
      <div className="flex h-[17px] min-w-0 flex-1 items-center justify-between border-l border-[#333] bg-[#414141] px-1 text-[#8a8a8a]">
        <Chevron dir="left" />
        <span className="ml-3.5 h-4 w-[181px] rounded-full bg-[#5e5e5e]" />
        <Chevron dir="right" />
      </div>
      <div className="flex h-[17px] w-[45px] items-center pl-2">
        <svg width="16" height="13" viewBox="0 0 16 13" fill="none" stroke="#bdbdbd" strokeWidth="1.300"><path d="M1 1h14v14H1zM8 1v13" /></svg>
      </div>
    </footer>
  );
}

function DocumentWindow() {
  return (
    <section className="flex min-w-0 flex-1 flex-col">
      <div className="flex h-[29px] shrink-0 bg-[#393939]">
        <div className="flex items-center gap-2 bg-[#484848] pr-5 pl-3.5 text-[11px] font-medium text-[#ededed]">
          <button aria-label="关闭文档">
            <svg width="8" height="8" viewBox="0 0 8 8" stroke="#dcdcdc" strokeWidth="1.300"><path d="M1 1l6 6M7 1L1 7" /></svg>
          </button>
          *Alright 设计文档.indd @ 51% [GPU 预览] [转换]
        </div>
      </div>
      <div className="flex min-h-0 flex-1">
        <div className="flex min-w-0 flex-1 flex-col">
          <div className="flex shrink-0">
            <svg width="16" height="16" viewBox="0 0 16 16" className="shrink-0 bg-[#1c1c1c]" stroke="#8c8c8c">
              <path d="M0 4.500h15M5.500 0v15" strokeDasharray="1 1" />
              <path d="M15.500 0v16M0 15.500h16" />
            </svg>
            <HRuler />
          </div>
          <div className="flex min-h-0 flex-1">
            <VRuler />
            <Page />
          </div>
        </div>
        <div className="flex w-4 shrink-0 flex-col items-center justify-between border-l border-[#3a3a3a] bg-[#414141] pt-0.5 pb-1 text-[#8a8a8a]">
          <Chevron dir="up" />
          <Chevron />
        </div>
      </div>
      <StatusBar />
    </section>
  );
}

/* ---------- right dock and floating panel ---------- */

function Dock() {
  return (
    <aside className="flex w-[163px] shrink-0 flex-col border-l-2 border-[#323232] bg-[#484848]">
      <div className="flex h-3 items-center justify-end border-b border-[#323232] bg-[#3c3c3c] pr-0.5"><DoubleChevron dir="left" /></div>
      <div className="flex h-[7px] justify-center pt-0.5"><Grip /></div>
      <button className="flex h-[34px] items-center gap-2.5 pl-2.5 text-[12px] font-medium text-[#f0f0f0]">
        <svg width="18" height="18" viewBox="0 0 18 18" fill={G}>
          <path d="M8.500 0h1v18h-1zM4.500 2.500h3.300V15H0V8zM0 7.500L4 3v4zM10.200 2.500h3.300V8H18v7h-7.800zM14.200 3L18 7h-3.800z" />
          <path d="M4.500 2.500V8H0" stroke="#484848" fill="none" />
        </svg>
        页面
      </button>
      <div className="flex-1 border-t border-[#323232]" />
    </aside>
  );
}

type StyleRow = { name: string; kind: "root" | "open" | "closed" | "child" | "shifted"; on?: boolean };

const styles: StyleRow[] = [
  { name: "[基本段落]", kind: "root" },
  { name: "跳转指示", kind: "root" },
  { name: "版本编号", kind: "root" },
  { name: "目录组", kind: "open" },
  { name: "目录标题", kind: "child" },
  { name: "目录一级文本", kind: "child" },
  { name: "目录二级文本", kind: "child" },
  { name: "正文组", kind: "open" },
  { name: "正文", kind: "child" },
  { name: "专业介绍", kind: "child" },
  { name: "个人介绍", kind: "child" },
  { name: "人名", kind: "child" },
  { name: "时间轴正文", kind: "child" },
  { name: "含代码正文", kind: "child", on: true },
  { name: "界面介绍", kind: "shifted" },
  { name: "正文第一段", kind: "child" },
  { name: "标题组", kind: "closed" },
];

const indent = { root: "pl-[35px]", open: "pl-1", closed: "pl-1", child: "pl-[50px]", shifted: "pl-[53px]" };

function StylesPanel() {
  return (
    <aside aria-label="段落样式" className="absolute top-[143px] right-0 flex h-[583px] w-[235px] flex-col overflow-hidden rounded-tl-[4px] border-y border-l border-[#2b2b2b] bg-[#484848] text-[13px] font-medium text-white shadow-[0_2px_6px_rgba(0,0,0,0.3)]">
      <div className="flex h-[13px] shrink-0 items-center justify-between bg-[#3f3f3f] pl-1">
        <button aria-label="关闭面板">
          <svg width="8" height="8" viewBox="0 0 8 8" stroke="#bdbdbd" strokeWidth="1.200"><path d="M1 1l6 6M7 1L1 7" /></svg>
        </button>
        <DoubleChevron dir="left" />
      </div>
      <div role="tablist" className="flex h-[27px] shrink-0 items-stretch border-t border-[#2f2f2f] bg-[#3a3a3a] text-[12px]">
        <button role="tab" className="w-12 border-r border-b border-[#2f2f2f] text-[#a8a8a8]">段落</button>
        <button role="tab" aria-selected="true" className="flex w-[78px] items-center justify-center gap-1 border-r border-[#2f2f2f] bg-[#484848] text-[12px]">
          <svg width="6" height="10" viewBox="0 0 6 10" fill="none" stroke="#bdbdbd"><path d="M.5 4L3 1l2.500 3zM.5 6L3 9l2.500-3z" /></svg>
          段落样式
        </button>
        <div className="flex flex-1 items-center justify-end overflow-hidden border-b border-[#2f2f2f]"><MenuLines /></div>
      </div>
      <div className="flex h-[25px] shrink-0 items-center pl-[5px]">
        <span>含代码正文 (正文组)</span>
        <button aria-label="清除优先选项" className="ml-auto">
          <svg width="13" height="13" viewBox="0 0 13 13" fill="none" stroke="#c4c4c4" strokeWidth="1.200"><path d="M3 1H1v11h2M10 1h2v11h-2" /><path d="M6.500 3.500v6M3.500 6.500h6" strokeWidth="1.800" /></svg>
        </button>
        <button aria-label="快速应用" className="mr-0.5 ml-4"><Bolt /></button>
      </div>
      <ul className="flex-1 overflow-hidden">
        {styles.map((s) => (
          <li key={s.name} className={"flex h-[22px] items-center border-t border-[#545454] " + indent[s.kind] + (s.on ? " bg-[#455d76]" : "")}>
            {(s.kind === "open" || s.kind === "closed") && (
              <button aria-label="展开或折叠" className="mr-[3px] flex items-center gap-1 text-[#bdbdbd]">
                <Chevron dir={s.kind === "open" ? "down" : "right"} />
                <Folder />
              </button>
            )}
            {s.name}
          </li>
        ))}
        <li className="border-t border-[#545454]" />
      </ul>
      <div className="flex h-[26px] shrink-0 items-center border-t border-[#545454] pr-[17px] pl-[5px]">
        <button aria-label="添加到库">
          <svg width="19" height="13" viewBox="0 0 19 13" fill={G}><path d="M7 11.500h9a3 3 0 001-5.800A4.500 4.500 0 0013.500 2 4.500 4.500 0 006 3.500 3.500 3.500 0 005.500 6L9.500 9z" /><path d="M0 8.500h4V6l4 3.500L4 13v-2.500H0z" /></svg>
        </button>
        <div className="ml-auto flex items-center gap-[15px]">
          <button aria-label="新建样式组"><Folder /></button>
          <button aria-label="清除选区" className="flex w-4 items-center text-[13px] leading-none text-[#858585]">
            ¶
            <svg width="8" height="8" viewBox="0 0 8 8" stroke="#858585" className="shrink-0"><path d="M0 8L8 0M1 3l6 2M4 1v6" /></svg>
          </button>
          <button aria-label="新建样式"><svg width="11" height="11" viewBox="0 0 11 11" fill={G}><path d="M0 0h11v11H5.500V5.500H0zM0 6.500h4.500V11z" /></svg></button>
          <button aria-label="删除样式"><svg width="12" height="13" viewBox="0 0 12 13" fill="none" stroke={G} strokeWidth="1.100"><path d="M0 2.500h12M4 2V.6h4V2M1.500 3v9.400h9V3M4 4.500V11M6 4.500V11M8 4.500V11" /></svg></button>
        </div>
      </div>
      <div className="flex h-2 shrink-0 justify-center border-t border-[#2f2f2f] pt-px"><Grip /></div>
    </aside>
  );
}

export default function App() {
  return (
    <div className="relative flex h-screen flex-col overflow-hidden bg-[#484848] [font-family:Lato,'Noto_Sans_CJK_SC',sans-serif]">
      <AppBar />
      <ControlBar />
      <div className="flex min-h-0 flex-1">
        <Toolbar />
        <DocumentWindow />
        <Dock />
      </div>
      <StylesPanel />
    </div>
  );
}
